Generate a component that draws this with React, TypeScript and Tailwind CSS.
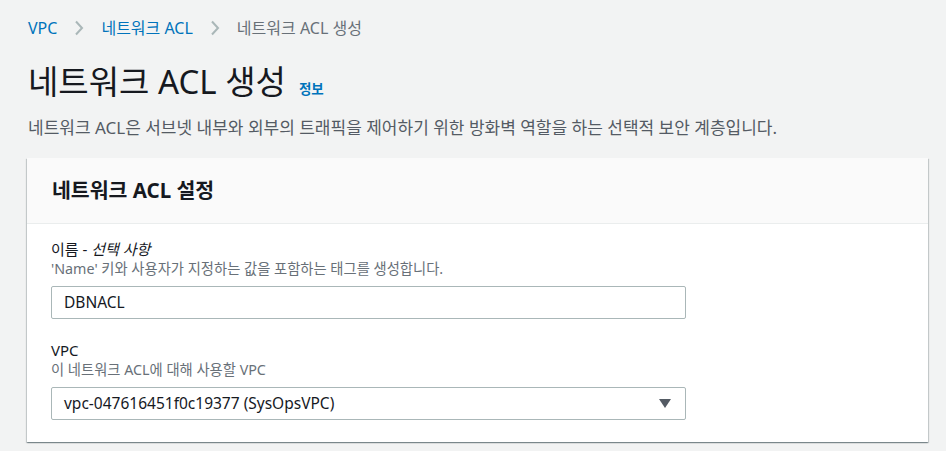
const font = { fontFamily: '"Noto Sans", "Noto Sans CJK KR", sans-serif' };

function Chevron() {
  return (
    <svg width="10" height="16" viewBox="0 0 10 16" className="shrink-0">
      <path d="M2 1.5 8 8l-6 6.5" fill="none" stroke="#aab7b8" strokeWidth="2" />
    </svg>
  );
}

function Field({
  label,
  optional,
  hint,
  children,
}: {
  label: string;
  optional?: string;
  hint: string;
  children: React.ReactNode;
}) {
  return (
    <div className="flex flex-col">
      <div className="text-[15px] leading-[20px] text-[#16191f]">
        {label}
        {optional && (
          <>
            {" - "}
            <i>{optional}</i>
          </>
        )}
      </div>
      <div className="text-[14.3px] leading-[19px] text-[#687078]">{hint}</div>
      <div className="mt-[8px]">{children}</div>
    </div>
  );
}

export default function App() {
  return (
    <div className="w-[946px] h-[451px] bg-[#f2f3f3] overflow-hidden" style={font}>
      <div className="pl-[28px] pt-[17px]">
        <nav className="flex items-center gap-[17px] text-[16px] leading-[22px]">
          <span className="text-[#0073bb]">VPC</span>
          <Chevron />
          <span className="text-[#0073bb]">네트워크 ACL</span>
          <Chevron />
          <span className="text-[#687078]">네트워크 ACL 생성</span>
        </nav>

        <div className="mt-[22px] flex items-baseline gap-[13px]">
          <h1 className="text-[33px] leading-[42px] text-[#16191f]">네트워크 ACL 생성</h1>
          <span className="text-[13.5px] font-bold text-[#0073bb]">정보</span>
        </div>
        <p className="mt-[13px] text-[17px] leading-[24px] text-[#545b64]">
          네트워크 ACL은 서브넷 내부와 외부의 트래픽을 제어하기 위한 방화벽 역할을 하는 선택적 보안 계층입니다.
        </p>

        <section className="mt-[18px] w-[901px] -ml-px bg-white shadow-[0_1px_1px_0_rgba(0,28,36,0.3),1px_1px_1px_0_rgba(0,28,36,0.15),-1px_1px_1px_0_rgba(0,28,36,0.15)]">
          <header className="h-[66px] flex items-center px-[25px] bg-[#fafafa] border-b border-[#eaeded]">
            <h2 className="text-[20.5px] font-bold text-[#16191f]">네트워크 ACL 설정</h2>
          </header>
          <div className="px-[24px] pt-[15px] pb-[22px] flex flex-col gap-[21px]">
            <Field label="이름" optional="선택 사항" hint="'Name' 키와 사용자가 지정하는 값을 포함하는 태그를 생성합니다.">
              <div className="w-[635px] h-[33px] border border-[#aab7b8] rounded-[2px] bg-white flex items-center px-[12px] text-[15.5px] text-[#16191f]">
                DBNACL
              </div>
            </Field>
            <Field label="VPC" hint="이 네트워크 ACL에 대해 사용할 VPC">
              <div className="w-[635px] h-[33px] border border-[#aab7b8] rounded-[2px] bg-white flex items-center justify-between pl-[12px] pr-[14px] text-[15.5px] text-[#16191f]">
                <span>vpc-047616451f0c19377 (SysOpsVPC)</span>
                <svg width="12" height="9" viewBox="0 0 12 9">
                  <path d="M0 0h12L6 9z" fill="#545b64" />
                </svg>
              </div>
            </Field>
          </div>
        </section>
      </div>
    </div>
  );
}
